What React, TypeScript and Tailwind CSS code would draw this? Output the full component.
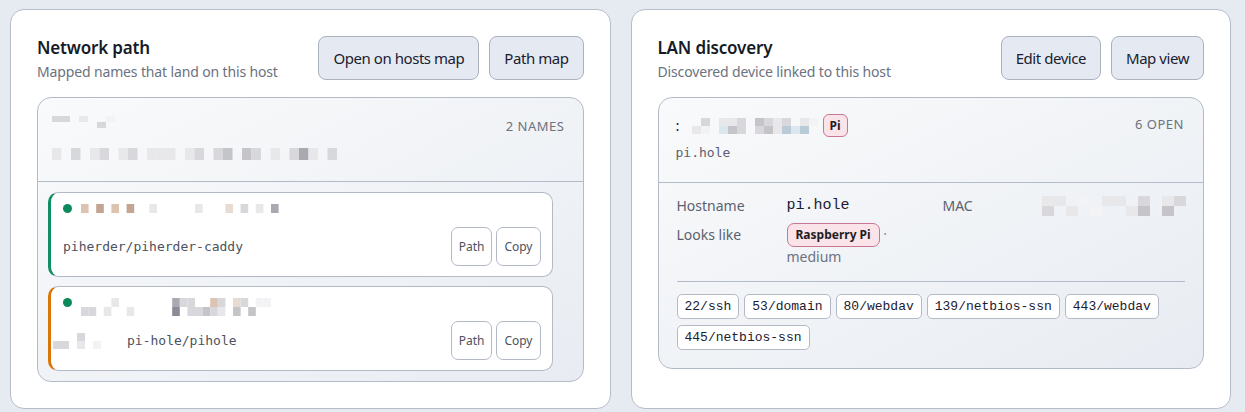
import React from "react";

// Shades for the pixelated (redacted) labels
const shade: Record<string, string> = {
  w: "#f3f3f5",
  a: "#e8e8eb",
  b: "#d8d8dc",
  c: "#c4c4c9",
  d: "#a9a9b0",
  e: "#8c8a94",
  r: "#dcc3b2",
  s: "#c4a492",
  t: "#b08f7d",
  u: "#e6dcd4",
  v: "#dce6ee",
  x: "#b9cbd6",
  k: "#7a5a3a",
};

type MosaicProps = { rows: string[]; cw: number; ch: number; className?: string };

const Mosaic: React.FC<MosaicProps> = ({ rows, cw, ch, className }) => {
  const cols = Math.max(...rows.map((r) => r.length));
  return (
    <svg width={cols * cw} height={rows.length * ch} className={className}>
      {rows.map((row, y) =>
        row.split("").map((k, x) =>
          shade[k] ? (
            <rect key={`${x}-${y}`} x={x * cw} y={y * ch} width={cw} height={ch} fill={shade[k]} />
          ) : null,
        ),
      )}
    </svg>
  );
};

const sans = "font-['Noto_Sans',sans-serif]";
const mono = "font-['DejaVu_Sans_Mono',monospace]";
const lmono = "font-['Liberation_Mono',monospace]";

const HeaderButton: React.FC<{ children: React.ReactNode }> = ({ children }) => (
  <button className="h-[44px] px-[14px] rounded-[8px] border border-[#aab2be] bg-[#e5eaf2] text-[15px] tracking-[-0.03em] text-[#1b2030] whitespace-nowrap">
    {children}
  </button>
);

const SmallButton: React.FC<{ children: React.ReactNode }> = ({ children }) => (
  <button className="h-[39px] px-[7px] rounded-[7px] border border-[#b3bac6] bg-white text-[12px] text-[#4b5260]">
    {children}
  </button>
);

const CardHeader: React.FC<{ title: string; sub: string; actions: string[] }> = ({ title, sub, actions }) => (
  <div className="flex items-start justify-between">
    <div>
      <h2 className="text-[17px] leading-6 font-semibold tracking-[-0.01em] text-[#161b26]">{title}</h2>
      <p className="mt-[2px] text-[14px] leading-5 tracking-[-0.01em] text-[#6b7280]">{sub}</p>
    </div>
    <div className="flex gap-[10px]">
      {actions.map((a) => (
        <HeaderButton key={a}>{a}</HeaderButton>
      ))}
    </div>
  </div>
);

const routes = [
  {
    accent: "border-l-[#0f8f62]",
    title: ["r.s.r.s..a.....a...u.b.a.d"],
    prefix: null as string[] | null,
    path: "piherder/piherder-caddy",
  },
  {
    accent: "border-l-[#d97706]",
    title: ["....a.......dbb..rb.ub.ww", "bb.a..a.....e.bbcba.c.c."],
    prefix: ["...b..", "bb.a.w"],
    path: "pi-hole/pihole",
  },
];

const ports = ["22/ssh", "53/domain", "80/webdav", "139/netbios-ssn", "443/webdav", "445/netbios-ssn"];

export default function App() {
  return (
    <div className={`${sans} min-h-[412px] bg-[#e6eaf1] pl-[10px] pr-[14px] pt-[9px] pb-[4px] grid grid-cols-2 gap-[20px]`}>
      {/* Network path */}
      <section className="rounded-[14px] border border-[#b6bdc9] bg-white px-[26px] pt-[26px] pb-[26px] flex flex-col">
        <CardHeader
          title="Network path"
          sub="Mapped names that land on this host"
          actions={["Open on hosts map", "Path map"]}
        />
        <div className="mt-[15px] rounded-[14px] border border-[#b3bbc8] bg-gradient-to-br from-[#f9fafb] to-[#e8ecf2] overflow-hidden">
          <div className="h-[84px] px-[14px] pt-[18px] flex justify-between border-b border-[#b3bbc8]">
            <div className="flex flex-col gap-[20px]">
              <Mosaic rows={["bb.a..w", ".....b"]} cw={9} ch={6} />
              <Mosaic rows={["a.b.ab.ab.aaa.ab.bc.cb.a.bda.b"]} cw={9.5} ch={12} />
            </div>
            <span className="text-[13px] tracking-[0.04em] text-[#6b7280] leading-5 pr-[4px]">2 NAMES</span>
          </div>
          <div className="pl-[10px] pr-[30px] pt-[10px] pb-[10px] flex flex-col gap-[9px]">
            {routes.map((r, i) => (
              <div
                key={i}
                className={`h-[85px] rounded-[10px] border border-[#b3bac6] border-l-[3px] ${r.accent} bg-white pl-[12px] pr-[11px] pt-[10px] flex flex-col`}
              >
                <div className="flex items-start gap-[9px]">
                  <span className="mt-[1px] w-[9px] h-[9px] rounded-full bg-[#0b8a5c]" />
                  <Mosaic rows={r.title} cw={7.6} ch={9} className="mt-[1px]" />
                </div>
                <div className="mt-auto mb-[10px] flex items-center justify-between">
                  <div className="flex items-center gap-[26px]">
                    {r.prefix && <Mosaic rows={r.prefix} cw={8} ch={8} className="-ml-[10px]" />}
                    <span className={`${mono} text-[13px] text-[#4b5260]`}>{r.path}</span>
                  </div>
                  <div className="flex gap-[4px]">
                    <SmallButton>Path</SmallButton>
                    <SmallButton>Copy</SmallButton>
                  </div>
                </div>
              </div>
            ))}
          </div>
        </div>
      </section>

      {/* LAN discovery */}
      <section className="rounded-[14px] border border-[#b6bdc9] bg-white px-[26px] pt-[26px] pb-[26px] flex flex-col">
        <CardHeader
          title="LAN discovery"
          sub="Discovered device linked to this host"
          actions={["Edit device", "Map view"]}
        />
        <div className="mt-[15px] self-stretch rounded-[14px] border border-[#b3bbc8] bg-gradient-to-br from-[#f9fafb] to-[#e8ecf2]">
          <div className="h-[85px] px-[17px] pt-[16px] flex justify-between border-b border-[#b3bbc8]">
            <div>
              <div className="flex items-center gap-[3px]">
                <span className="text-[15px] text-[#1b2030] leading-none">:</span>
                <Mosaic rows={["..b.aab.cbab.aw", ".aw.vcb.bcaxvx."]} cw={9} ch={8} />
                <span className="ml-[2px] h-[23px] px-[6px] rounded-[6px] border border-[#c97790] bg-[#fbe3ea] text-[12px] font-bold text-[#1e1e24] flex items-center">
                  Pi
                </span>
              </div>
              <div className={`${mono} mt-[6px] text-[13px] text-[#5b6170]`}>pi.hole</div>
            </div>
            <span className="text-[13px] tracking-[0.04em] text-[#6b7280] leading-5 pr-[2px]">6 OPEN</span>
          </div>
          <div className="px-[18px] pt-[13px] pb-[18px]">
            <div className="grid grid-cols-[110px_156px_99px_1fr] gap-y-[7px] text-[14px] text-[#5b6170] pb-[14px] border-b border-[#b3bbc8]">
              <span className="leading-5">Hostname</span>
              <span className={`${lmono} text-[15px] leading-5 font-medium text-[#1b2030]`}>pi.hole</span>
              <span className="leading-5">MAC</span>
              <Mosaic rows={["aa.w.aa.b.ab", "b.a.w..ac.c."]} cw={12} ch={10} />
              <span className="leading-5 pt-[2px]">Looks like</span>
              <div className="col-span-3 w-[150px] leading-5">
                <span className="inline-flex items-center h-[24px] px-[8px] rounded-[7px] border border-[#c97790] bg-[#fbe3ea] text-[12px] font-bold text-[#1e1e24] align-middle">
                  Raspberry Pi
                </span>{" "}
                <span className="text-[#8a909c]">·</span>{" "}
                <span className="text-[#6b7280]">medium</span>
              </div>
            </div>
            <div className="pt-[12px] flex flex-wrap gap-x-[5px] gap-y-[6px]">
              {ports.map((p) => (
                <span
                  key={p}
                  className={`${lmono} h-[25px] px-[7px] rounded-[5px] border border-[#b3bac6] bg-white text-[13px] text-[#1b2030] flex items-center`}
                >
                  {p}
                </span>
              ))}
            </div>
          </div>
        </div>
      </section>
    </div>
  );
}
